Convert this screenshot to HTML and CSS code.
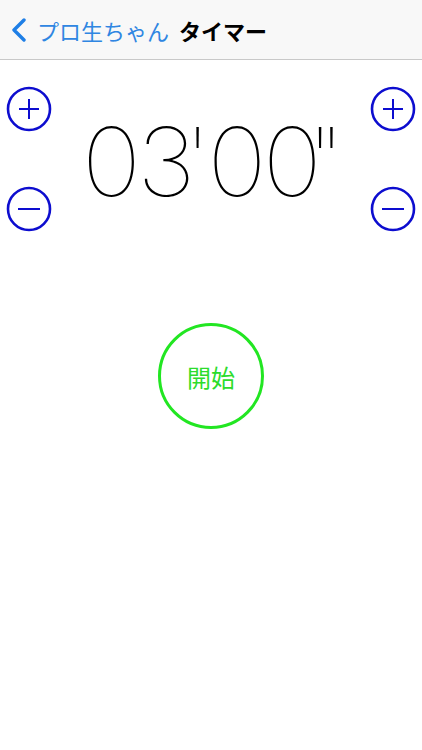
FILE: index.html
```html
<!DOCTYPE html>
<html lang="ja">
<head>
<meta charset="utf-8">
<title>タイマー</title>
<link rel="stylesheet" href="styles.css">
</head>
<body>
<header class="nav">
  <svg class="chevron" width="16" height="24" viewBox="0 0 16 24"><path d="M13 2 L3 12 L13 22" fill="none" stroke="#1f7fe6" stroke-width="3.4" stroke-linecap="round" stroke-linejoin="round"/></svg>
  <span class="back">プロ生ちゃん</span>
  <span class="title">タイマー</span>
</header>
<main class="main">
  <section class="timer">
    <div class="col">
      <button class="adj" aria-label="plus"><svg width="46" height="46" viewBox="0 0 46 46"><circle cx="23" cy="23" r="21" fill="none" stroke="#0d0dcf" stroke-width="2.6"/><path d="M13 23 H33 M23 13 V33" stroke="#0d0dcf" stroke-width="2"/></svg></button>
      <button class="adj" aria-label="minus"><svg width="46" height="46" viewBox="0 0 46 46"><circle cx="23" cy="23" r="21" fill="none" stroke="#0d0dcf" stroke-width="2.6"/><path d="M12 23 H34" stroke="#0d0dcf" stroke-width="2"/></svg></button>
    </div>
    <div class="digits"><span class="num">03</span><span class="prime">'</span><span class="num">00</span><span class="dprime">"</span></div>
    <div class="col">
      <button class="adj" aria-label="plus"><svg width="46" height="46" viewBox="0 0 46 46"><circle cx="23" cy="23" r="21" fill="none" stroke="#0d0dcf" stroke-width="2.6"/><path d="M13 23 H33 M23 13 V33" stroke="#0d0dcf" stroke-width="2"/></svg></button>
      <button class="adj" aria-label="minus"><svg width="46" height="46" viewBox="0 0 46 46"><circle cx="23" cy="23" r="21" fill="none" stroke="#0d0dcf" stroke-width="2.6"/><path d="M12 23 H34" stroke="#0d0dcf" stroke-width="2"/></svg></button>
    </div>
  </section>
  <div class="start-wrap">
    <button class="start">開始</button>
  </div>
</main>
</body>
</html>
```
FILE: styles.css
```css
html, body {
  margin: 0;
  padding: 0;
  background: #ffffff;
}
body {
  width: 422px;
  height: 750px;
  font-family: "Noto Sans CJK JP", "Noto Sans", sans-serif;
}
.nav {
  height: 60px;
  box-sizing: border-box;
  border-bottom: 1px solid #c9c9c9;
  background: #f8f8f8;
  display: flex;
  align-items: center;
  padding-left: 11px;
}
.chevron {
  display: block;
  margin-right: 10px;
  margin-top: 1px;
}
.back {
  color: #2f86e2;
  font-size: 22px;
  margin-right: 10px;
  line-height: 1;
}
.title {
  color: #000;
  font-size: 22px;
  font-weight: 700;
  line-height: 1;
}
.main {
  padding-top: 26px;
}
.timer {
  display: flex;
  justify-content: space-between;
  padding: 0 6px;
  align-items: flex-start;
}
.col {
  display: flex;
  flex-direction: column;
  gap: 54px;
}
.adj {
  width: 46px;
  height: 46px;
  padding: 0;
  border: 0;
  background: none;
  display: block;
}
.adj svg { display: block; }
.digits {
  font-family: "Inter", sans-serif;
  font-weight: 100;
  font-size: 95px;
  line-height: 1;
  color: #000;
  margin-top: 28px;
  letter-spacing: -4px;
  transform: scaleX(1.06);
  white-space: nowrap;
}
.prime {
  margin: 0 0 0 -7px;
}
.dprime {
  margin-left: -11px;
}
.start-wrap {
  display: flex;
  justify-content: center;
  margin-top: 91px;
}
.start {
  width: 106px;
  height: 106px;
  border-radius: 50%;
  border: 3px solid #22e622;
  background: none;
  color: #2cdc2c;
  font-family: "Noto Sans CJK JP", sans-serif;
  font-size: 24px;
  padding: 0;
}
```
